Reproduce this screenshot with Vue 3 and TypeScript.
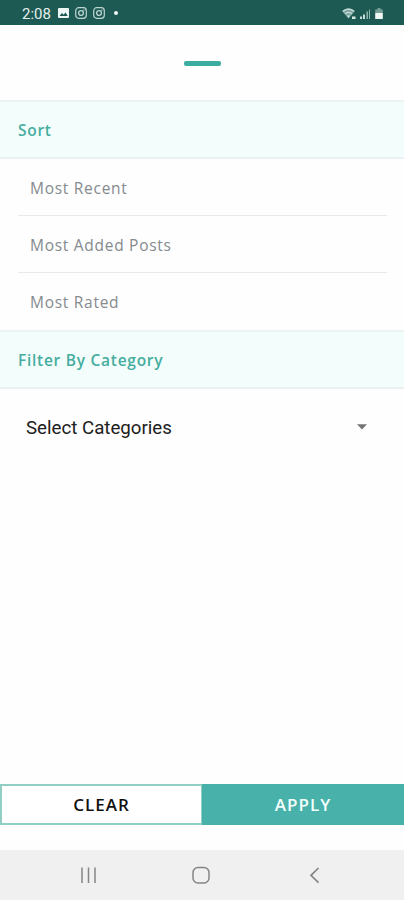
<script setup lang="ts">
import { ref } from 'vue'

const sortOptions: string[] = ['Most Recent', 'Most Added Posts', 'Most Rated']
const selected = ref<string | null>(null)

function clear(): void {
  selected.value = null
}
</script>

<template>
  <div class="screen">
    <header class="status">
      <span class="time">2:08</span>
      <svg class="picture" width="11" height="10" viewBox="0 0 11 10">
        <rect width="11" height="10" rx="1" fill="#eef7f5" />
        <path d="M1.5 8 4 5l1.6 1.8L7.5 4.5 9.8 8z" fill="#1d5a53" />
      </svg>
      <svg v-for="n in 2" :key="n" class="camera" width="12" height="12" viewBox="0 0 12 12" fill="none" stroke="#bcd5d1">
        <rect x=".7" y=".7" width="10.6" height="10.6" rx="3" stroke-width="1.2" />
        <circle cx="6" cy="6" r="2.4" stroke-width="1.3" />
        <circle cx="8.9" cy="3.1" r=".3" />
      </svg>
      <span class="dot"></span>
      <svg class="signals" width="43" height="14" viewBox="0 0 43 14">
        <path d="M0 4.100Q6.500-1.400 13 4.100L6.500 11.500z" fill="#7fa7a1" />
        <path d="M1 4.300Q6.500 0 12 4.300M3 6.700Q6.500 3.900 10 6.700" fill="none" stroke="#cbdfdc" stroke-width="1.300" />
        <path d="M5 8.600h3L6.500 11zM10 9.500h3.500v2.500H10z" fill="#d8e8e5" />
        <path d="M18 9.500h2V12h-2zM21 7.500h2V12h-2z" fill="#c7dcd8" />
        <path d="M24.500 4.500h1.500V12h-1.500zM27 2.500h1V12h-1z" fill="#8fb3ad" />
        <path d="M35.500 1h3v1.500h2.300V6h-7.600V2.500h2.300z" fill="#779f99" />
        <path d="M33.200 6h7.600v6h-7.600z" fill="#f0f8f6" />
      </svg>
    </header>

    <div class="handle-area"><span class="handle"></span></div>

    <h2 class="section">Sort</h2>
    <ul class="options">
      <li v-for="option in sortOptions" :key="option" @click="selected = option">{{ option }}</li>
    </ul>

    <h2 class="section">Filter By Category</h2>
    <div class="select">
      <span>Select Categories</span>
      <svg width="10" height="6" viewBox="0 0 10 6"><path d="M0 .3h10L5 5.500z" fill="#747474" /></svg>
    </div>

    <div class="actions">
      <button class="clear" @click="clear">CLEAR</button>
      <button class="apply">APPLY</button>
    </div>

    <nav class="system-nav">
      <svg width="404" height="50" viewBox="0 0 404 50" fill="none" stroke="#858585" stroke-width="1.500">
        <path d="M82 17.500v15.500M88.500 17.500v15.500M95 17.500v15.500" />
        <rect x="193" y="17.500" width="16" height="15.500" rx="5" />
        <path d="M318.500 18 311 25.300l7.500 7.300" stroke-width="1.700" />
      </svg>
    </nav>
  </div>
</template>

<style>
body {
  margin: 0;
}
</style>

<style scoped>
.screen {
  width: 404px;
  height: 900px;
  display: flex;
  flex-direction: column;
  background: #fefefe;
  font-family: 'Open Sans', sans-serif;
  overflow: hidden;
}
.status {
  flex: none;
  box-sizing: border-box;
  height: 25px;
  padding: 2px 19px 0 22px;
  display: flex;
  align-items: center;
  background: #1d5a53;
}
.time {
  width: 36px;
  font: 15px/22px Roboto, sans-serif;
  color: #e4efed;
}
.picture,
.camera,
.dot {
  margin-bottom: 1px;
}
.camera {
  margin-left: 6px;
}
.dot {
  width: 4px;
  height: 4px;
  margin-left: 9px;
  border-radius: 50%;
  background: #eef7f5;
}
.signals {
  margin-left: auto;
}
.handle-area {
  flex: none;
  box-sizing: border-box;
  height: 75px;
  padding-top: 1px;
  display: flex;
  align-items: center;
  justify-content: center;
}
.handle {
  width: 37px;
  height: 5px;
  border-radius: 2px;
  background: #3bada0;
}
.section {
  flex: none;
  box-sizing: border-box;
  height: 59px;
  margin: 0;
  padding-left: 18px;
  border-top: 2px solid #ebf3f3;
  border-bottom: 2px solid #e9f1f2;
  background: #f2fdfc;
  color: #46ad9f;
  font-size: 15.5px;
  font-weight: 600;
  line-height: 56px;
  letter-spacing: 0.73px;
}
.options {
  flex: none;
  height: 171px;
  margin: 0;
  padding: 0 17px 0 18px;
  list-style: none;
}
.options li {
  box-sizing: border-box;
  height: 57px;
  padding-left: 12px;
  border-bottom: 1px solid #e9e9e9;
  color: #858a8e;
  font-size: 15.5px;
  line-height: 58px;
  letter-spacing: 0.72px;
}
.options li:last-child {
  border-bottom: 0;
}
.select {
  flex: none;
  height: 76px;
  padding: 0 37px 0 26px;
  display: flex;
  align-items: center;
  justify-content: space-between;
  color: #202020;
  font: 18.7px/24px Roboto, sans-serif;
}
.select span {
  padding-top: 1px;
}
.actions {
  flex: none;
  height: 41px;
  margin-top: auto;
  display: flex;
}
.actions button {
  box-sizing: border-box;
  width: 202px;
  margin: 0;
  padding: 0;
  border: 2px solid #91cec4;
  border-radius: 0;
  font: 600 17px/36px 'Open Sans', sans-serif;
  letter-spacing: 1px;
}
.actions .clear {
  border-right-width: 1px;
  background: #fff;
  color: #111;
}
.actions .apply {
  border-color: #48b1a7;
  background: #48b1a9;
  color: #f4fffd;
}
.system-nav {
  flex: none;
  height: 50px;
  margin-top: 25px;
  background: #f0f0f0;
}
.system-nav svg {
  display: block;
}
</style>
